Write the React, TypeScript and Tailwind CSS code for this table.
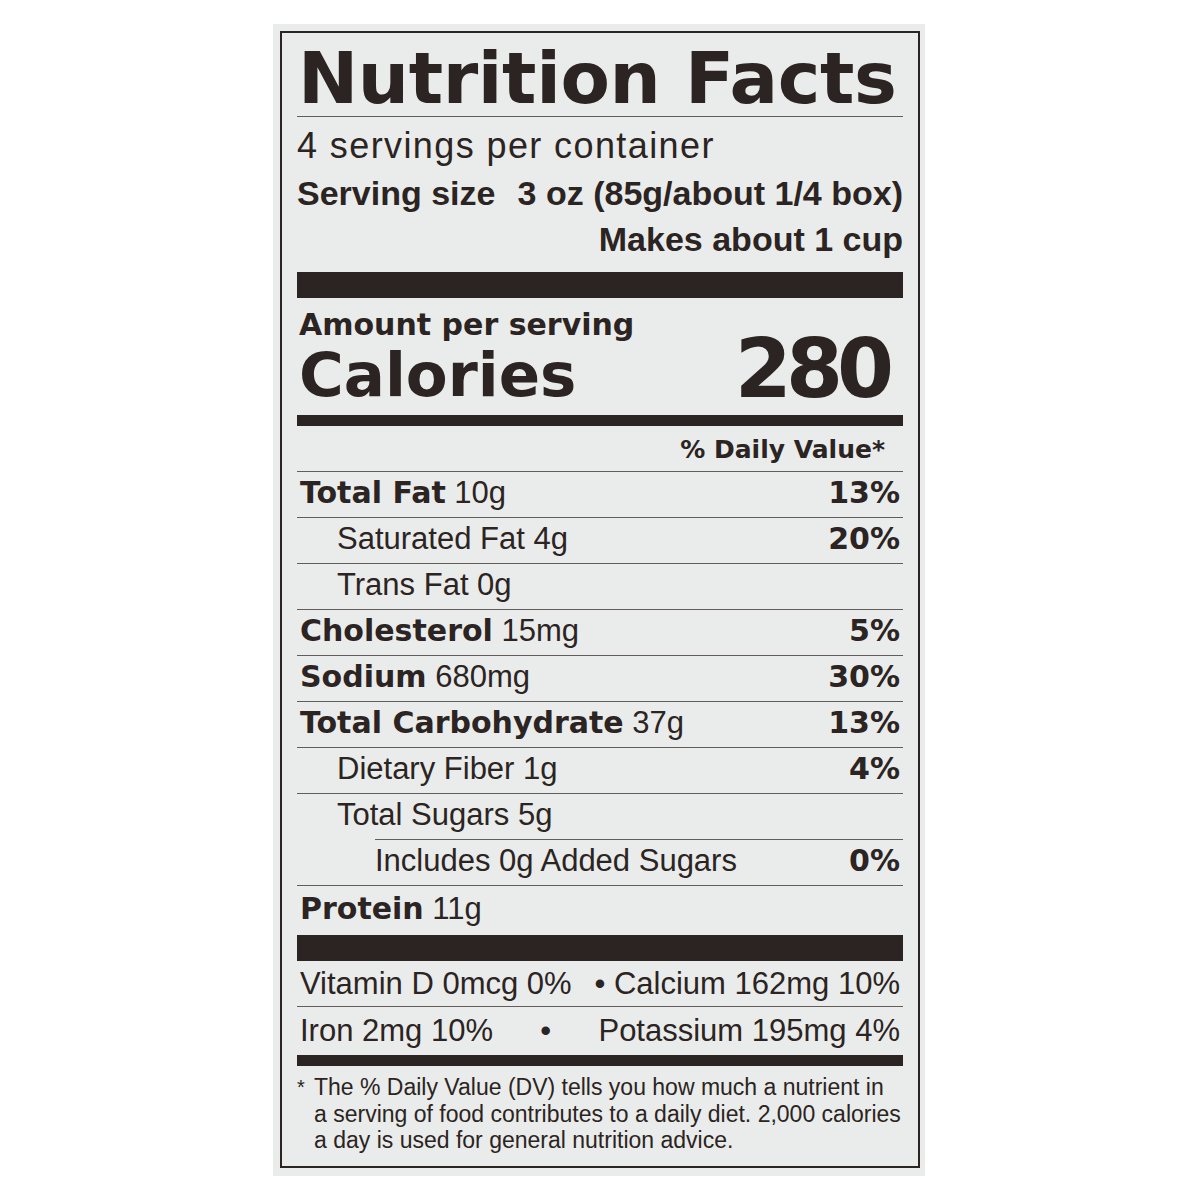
const heavy = "font-['DejaVu_Sans',sans-serif] font-bold";
const plain = "font-['Liberation_Sans',Arial,sans-serif]";

type Row = {
  label: string;
  amount?: string;
  dv?: string;
  indent?: 0 | 1 | 2;
  ruleIndent?: boolean;
};

const rows: Row[] = [
  { label: 'Total Fat', amount: '10g', dv: '13%' },
  { label: 'Saturated Fat 4g', dv: '20%', indent: 1 },
  { label: 'Trans Fat 0g', indent: 1 },
  { label: 'Cholesterol', amount: '15mg', dv: '5%' },
  { label: 'Sodium', amount: '680mg', dv: '30%' },
  { label: 'Total Carbohydrate', amount: '37g', dv: '13%' },
  { label: 'Dietary Fiber 1g', dv: '4%', indent: 1 },
  { label: 'Total Sugars 5g', indent: 1, ruleIndent: true },
  { label: 'Includes 0g Added Sugars', dv: '0%', indent: 2 },
];

function NutrientRow({ row }: { row: Row }) {
  const indent = row.indent ?? 0;
  return (
    <>
      <div className="h-[45px] flex items-end justify-between pb-[9px] pr-[3px]">
        {indent === 0 ? (
          <p className={`${heavy} text-[30px] leading-none pl-[3px] whitespace-nowrap`}>
            {row.label}
            <span className={`${plain} font-normal text-[31px]`}> {row.amount}</span>
          </p>
        ) : (
          <p
            className={`${plain} text-[31px] leading-none whitespace-nowrap ${
              indent === 1 ? 'pl-[40px]' : 'pl-[78px]'
            }`}
          >
            {row.label}
          </p>
        )}
        {row.dv && <p className={`${heavy} text-[30px] leading-none`}>{row.dv}</p>}
      </div>
      <div className={`h-px bg-[#625d5a] ${row.ruleIndent ? 'ml-[78px]' : ''}`} />
    </>
  );
}

export default function App() {
  return (
    <div className="min-h-screen bg-white pt-[24px] pl-[273px] text-[#2b2422]">
      <div className="w-[652px] bg-[#e9ecea] pt-[7px] pl-[7px] pr-[5px] pb-[8px]">
        <div className="border-2 border-[#2b2422] px-[15px] pb-[12px]">
          {/* header */}
          <div className="h-[84px] flex items-end pb-[2px] pl-[1px] border-b border-[#625d5a]">
            <h1 className={`${heavy} text-[72px] leading-none tracking-[-0.4px] whitespace-nowrap`}>
              Nutrition Facts
            </h1>
          </div>
          <div className="h-[47px] flex items-end">
            <p className={`${plain} text-[36px] leading-none tracking-[1.4px] whitespace-nowrap`}>
              4 servings per container
            </p>
          </div>
          <div className={`h-[47px] flex items-end justify-between pb-[1px] ${plain} font-bold text-[34px] leading-none`}>
            <span>Serving size</span>
            <span>3 oz (85g/about 1/4 box)</span>
          </div>
          <div className={`h-[61px] flex items-end justify-end pb-[16px] ${plain} font-bold text-[34px] leading-none`}>
            <span>Makes about 1 cup</span>
          </div>
          <div className="h-[26px] bg-[#2b2422]" />

          {/* calories */}
          <div className="h-[42px] flex items-end pl-[2px]">
            <p className={`${heavy} text-[30px] leading-none whitespace-nowrap`}>Amount per serving</p>
          </div>
          <div className="h-[75px] flex items-end justify-between pl-[2px]">
            <p className={`${heavy} text-[61px] leading-none mb-[10px]`}>Calories</p>
            <p className={`${heavy} text-[82px] leading-none tracking-[-6px] mb-[5px] mr-[15px]`}>280</p>
          </div>
          <div className="h-[11px] bg-[#2b2422]" />

          {/* daily value table */}
          <div className="h-[45px] flex items-end justify-end pb-[9px] pr-[18px]">
            <p className={`${heavy} text-[25px] leading-none whitespace-nowrap`}>% Daily Value*</p>
          </div>
          <div className="h-px bg-[#625d5a]" />
          {rows.map((row) => (
            <NutrientRow key={row.label} row={row} />
          ))}
          <div className="h-[49px] flex items-end pb-[11px] pl-[3px]">
            <p className={`${heavy} text-[30px] leading-none whitespace-nowrap`}>
              Protein
              <span className={`${plain} font-normal text-[31px]`}> 11g</span>
            </p>
          </div>
          <div className="h-[26px] bg-[#2b2422]" />

          {/* vitamins & minerals */}
          <div className={`h-[45px] flex items-end justify-between pb-[7px] pl-[3px] pr-[3px] ${plain} text-[31px] leading-none whitespace-nowrap`}>
            <span>Vitamin D 0mcg 0%</span>
            <span>• Calcium 162mg 10%</span>
          </div>
          <div className="h-px bg-[#625d5a]" />
          <div className={`h-[48px] flex items-end justify-between pb-[9px] pl-[3px] pr-[3px] ${plain} text-[31px] leading-none whitespace-nowrap`}>
            <span>Iron 2mg 10%</span>
            <span>•</span>
            <span>Potassium 195mg 4%</span>
          </div>
          <div className="h-[11px] bg-[#2b2422]" />

          {/* footnote */}
          <div className={`flex pt-[8px] ${plain} text-[23px] leading-[26.5px]`}>
            <span className="w-[17px] shrink-0 text-[20px]">*</span>
            <div className="whitespace-nowrap">
              <p>The % Daily Value (DV) tells you how much a nutrient in</p>
              <p>a serving of food contributes to a daily diet. 2,000 calories</p>
              <p>a day is used for general nutrition advice.</p>
            </div>
          </div>
        </div>
      </div>
    </div>
  );
}
